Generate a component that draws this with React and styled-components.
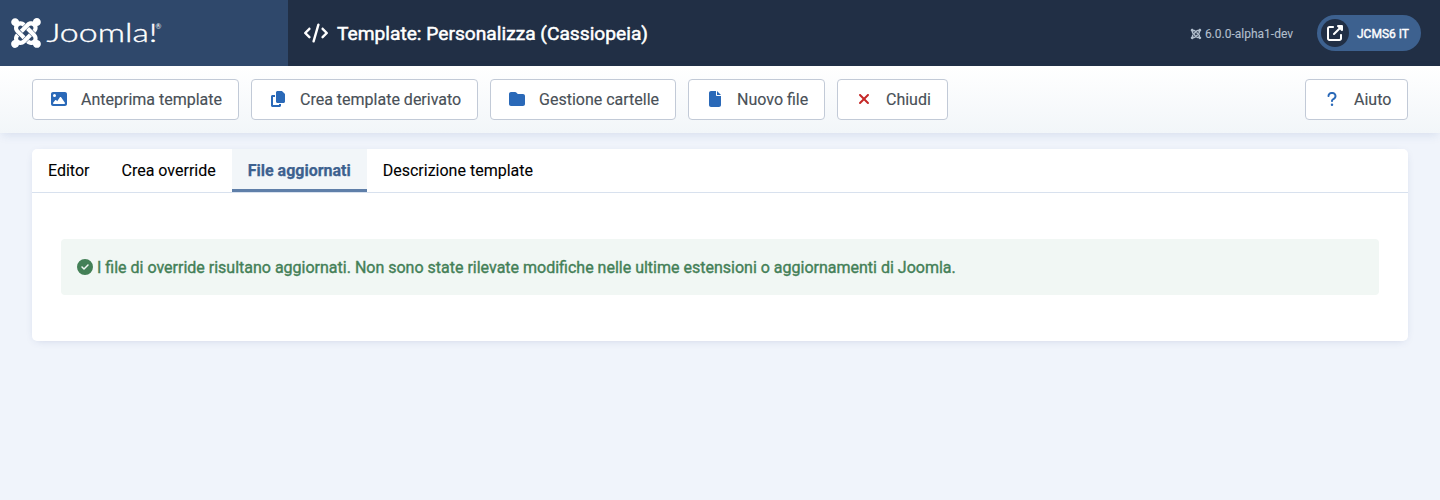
import React from "react";
import styled, { createGlobalStyle, css } from "styled-components";
import {
  FaCode, FaCopy, FaFolder, FaFile, FaXmark, FaQuestion, FaImage,
  FaCircleCheck, FaUpRightFromSquare, FaJoomla,
} from "react-icons/fa6";

const GlobalStyle = createGlobalStyle`
  *, *::before, *::after { box-sizing: border-box; }
  body {
    margin: 0;
    min-height: 100vh;
    background: #f0f4fb;
    color: #22262a;
    font: 400 16px/1.5 Roboto, "Noto Sans", sans-serif;
    -webkit-font-smoothing: antialiased;
  }
  svg { display: block; flex: none; }
`;

const Header = styled.header`
  display: flex;
  height: 66px;
  background: #212f45;
  color: #fff;
`;

const Brand = styled.a`
  display: flex;
  align-items: center;
  gap: 1px;
  width: 288px;
  padding-left: 9px;
  background: #2f486b;
`;

const Title = styled.h1`
  display: flex;
  flex: 1;
  align-items: center;
  gap: 9px;
  margin: 0;
  padding: 2px 0 0 16px;
  font-size: 19.2px;
  font-weight: 400;
  -webkit-text-stroke: 0.5px currentColor;
  white-space: nowrap;

  svg { width: 24px; margin-bottom: 2px; }
`;

const HeaderItems = styled.div`
  display: flex;
  align-items: center;
  gap: 24px;
  padding-right: 19px;
`;

const Version = styled.div`
  display: flex;
  align-items: center;
  gap: 3px;
  padding-top: 1px;
  color: #b2bfcd;
  font-size: 12px;
  -webkit-text-stroke: 0.1px currentColor;
`;

const SiteLink = styled.a`
  display: flex;
  align-items: center;
  gap: 8px;
  width: 104px;
  height: 36px;
  padding-left: 4px;
  border-radius: 18px;
  background: #3d618f;
  font-size: 12px;
  font-weight: 400;
  -webkit-text-stroke: 0.4px currentColor;
  white-space: nowrap;
`;

const SiteLabel = styled.span`
  padding-top: 1px;
`;

const SiteIcon = styled.span`
  display: grid;
  place-items: center;
  width: 28px;
  height: 28px;
  border-radius: 50%;
  background: #212f45;
`;

const Toolbar = styled.div`
  display: flex;
  gap: 12px;
  height: 67px;
  padding: 13px 32px;
  background: linear-gradient(#fff, #f2f6f9);
  box-shadow: 0 3px 10px -2px rgba(40, 80, 150, 0.15);
`;

const ToolButton = styled.button`
  display: flex;
  align-items: center;
  gap: 13px;
  width: ${(p) => p.$width}px;
  height: 41px;
  margin: 0 0 0 ${(p) => (p.$end ? "auto" : "0")};
  padding: 0 0 0 17px;
  border: 1px solid #c2cad7;
  border-radius: 4px;
  background: #fff;
  color: #495057;
  font: inherit;
  -webkit-text-stroke: 0.15px currentColor;
  white-space: nowrap;
`;

const ToolIcon = styled.span`
  display: grid;
  place-items: center;
  width: 18px;
  margin-bottom: 1px;
  color: ${(p) => (p.$danger ? "#c52827" : "#2a69b8")};
`;

const Card = styled.main`
  margin: 16px 32px 0;
  height: 192px;
  border-radius: 5px;
  background: #fff;
  box-shadow: 0 2px 10px -4px rgba(40, 60, 130, 0.25);
`;

const Tabs = styled.div`
  display: flex;
  height: 44px;
  border-bottom: 1px solid #d8e1ee;
`;

const Tab = styled.button`
  height: 43px;
  padding: 0 16px;
  border: 0;
  background: none;
  color: #000;
  font: inherit;
  -webkit-text-stroke: 0.1px currentColor;
  white-space: nowrap;
  ${(p) => p.$active && css`
    background: #f2f6f9;
    box-shadow: inset 0 -3px #5f7fa9;
    color: #3d618f;
    font-weight: 700;
    -webkit-text-stroke: 0.25px currentColor;
  `}
`;

const Alert = styled.div`
  display: flex;
  align-items: center;
  gap: 4px;
  height: 56px;
  margin: 46px 29px 0;
  padding: 0 16px;
  border-radius: 4px;
  background: #f1f7f4;
  color: #448057;
`;

const AlertText = styled.span`
  padding-top: 1px;
  -webkit-text-stroke: 0.38px currentColor;
  white-space: nowrap;
`;

const actions = [
  { label: "Anteprima template", Icon: FaImage, size: 16, width: 207 },
  { label: "Crea template derivato", Icon: FaCopy, size: 16, width: 227 },
  { label: "Gestione cartelle", Icon: FaFolder, size: 16, width: 186 },
  { label: "Nuovo file", Icon: FaFile, size: 16, width: 137 },
  { label: "Chiudi", Icon: FaXmark, size: 16, width: 111, danger: true },
  { label: "Aiuto", Icon: FaQuestion, size: 16, width: 103, end: true },
];

const tabs = ["Editor", "Crea override", "File aggiornati", "Descrizione template"];

function Logo() {
  return (
    <>
      <FaJoomla size={34} />
      <svg width="120" height="34" viewBox="0 0 120 34" fill="#fff" fontFamily="Lato, sans-serif">
        <text x="2.5" y="26" fontSize="25" fontWeight="300" stroke="#fff" strokeWidth="0.35" textLength="111" lengthAdjust="spacingAndGlyphs">Joomla!</text>
        <text x="111.5" y="13" fontSize="7">®</text>
      </svg>
    </>
  );
}

export default function App() {
  return (
    <>
      <GlobalStyle />
      <Header>
        <Brand><Logo /></Brand>
        <Title><FaCode size={24} />Template: Personalizza (Cassiopeia)</Title>
        <HeaderItems>
          <Version><FaJoomla size={12} />6.0.0-alpha1-dev</Version>
          <SiteLink><SiteIcon><FaUpRightFromSquare size={16} /></SiteIcon><SiteLabel>JCMS6 IT</SiteLabel></SiteLink>
        </HeaderItems>
      </Header>
      <Toolbar>
        {actions.map(({ label, Icon, size, width, danger, end }) => (
          <ToolButton key={label} $width={width} $end={end}>
            <ToolIcon $danger={danger}><Icon size={size} /></ToolIcon>
            {label}
          </ToolButton>
        ))}
      </Toolbar>
      <Card>
        <Tabs>
          {tabs.map((label, i) => <Tab key={label} $active={i === 2}>{label}</Tab>)}
        </Tabs>
        <Alert>
          <FaCircleCheck size={16} />
          <AlertText>I file di override risultano aggiornati. Non sono state rilevate modifiche nelle ultime estensioni o aggiornamenti di Joomla.</AlertText>
        </Alert>
      </Card>
    </>
  );
}
